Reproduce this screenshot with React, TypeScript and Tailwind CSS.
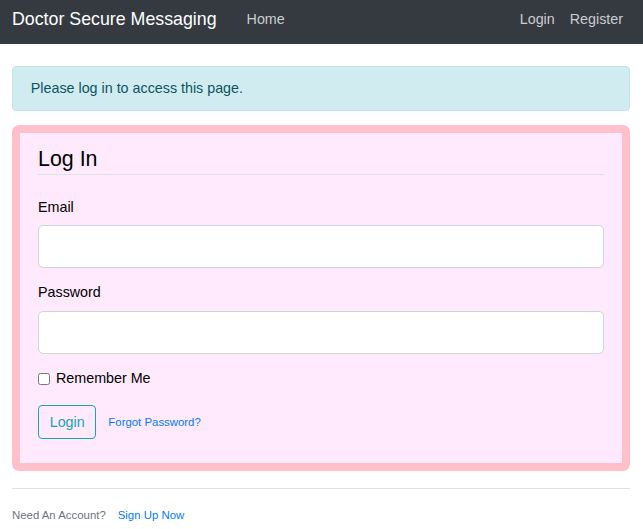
const FONT = "font-['Liberation_Sans','Helvetica',Arial,sans-serif]";

function Navbar() {
  return (
    <nav className="flex h-[44px] items-center bg-[#343a40] pb-[5px] pl-[12px] pr-[20px]">
      <a className="text-[17.8px] leading-[26.7px] text-white">Doctor Secure Messaging</a>
      <a className="ml-[30px] text-[14.3px] leading-[21.4px] text-white/75">Home</a>
      <div className="ml-auto flex gap-[15px] text-[14.3px] leading-[21.4px] text-white/75">
        <a>Login</a>
        <a>Register</a>
      </div>
    </nav>
  );
}

function Field({ label, type }: { label: string; type: string }) {
  return (
    <div className="mb-[14.3px]">
      <label className="mb-[7.1px] block text-[14.3px] leading-[21.4px] text-black">{label}</label>
      <input
        type={type}
        className="block h-[42.7px] w-full rounded-[5px] border border-[#ced4da] bg-white px-[14px] text-[17.8px] outline-none"
      />
    </div>
  );
}

export default function App() {
  return (
    <div className={`${FONT} min-h-[529px] bg-white text-[14.3px] leading-[21.4px] text-[#212529]`}>
      <Navbar />
      <main className="ml-[12px] w-[618px] pt-[22.4px]">
        {/* Flash message */}
        <div className="mb-[14.3px] rounded-[4px] border border-[#bee5eb] bg-[#d1ecf1] px-[17.8px] py-[10.7px] text-[#0c5460]">
          Please log in to access this page.
        </div>

        {/* Login form */}
        <div className="mb-[17.8px] rounded-[7px] border-[8px] border-[#ffc0cb] bg-[#ffeafd] px-[18px] pt-[9px] pb-[9px]">
          <div className="mb-[21.4px] border-b border-[#dee2e6] pt-[1.5px] text-[21.4px] leading-[30.5px] text-black">
            Log In
          </div>
          <Field label="Email" type="email" />
          <Field label="Password" type="password" />
          <div className="mb-[16px] flex items-center text-black">
            <input type="checkbox" className="m-0 h-[12px] w-[12px]" />
            <label className="ml-[6px]">Remember Me</label>
          </div>
          <div className="mb-[14.3px] flex items-center">
            <button className="rounded-[4px] border border-[#17a2b8] bg-transparent px-[10.7px] py-[5.35px] text-[14.3px] leading-[21.4px] text-[#17a2b8]">
              Login
            </button>
            <a className="ml-[12px] text-[11.4px] text-[#007bff]">Forgot Password?</a>
          </div>
        </div>

        {/* Footer */}
        <div className="border-t border-[#e2e2e2] pt-[15px]">
          <span className="text-[11.4px] text-[#6c757d]">Need An Account?</span>
          <a className="ml-[12px] text-[11.4px] text-[#007bff]">Sign Up Now</a>
        </div>
      </main>
    </div>
  );
}
